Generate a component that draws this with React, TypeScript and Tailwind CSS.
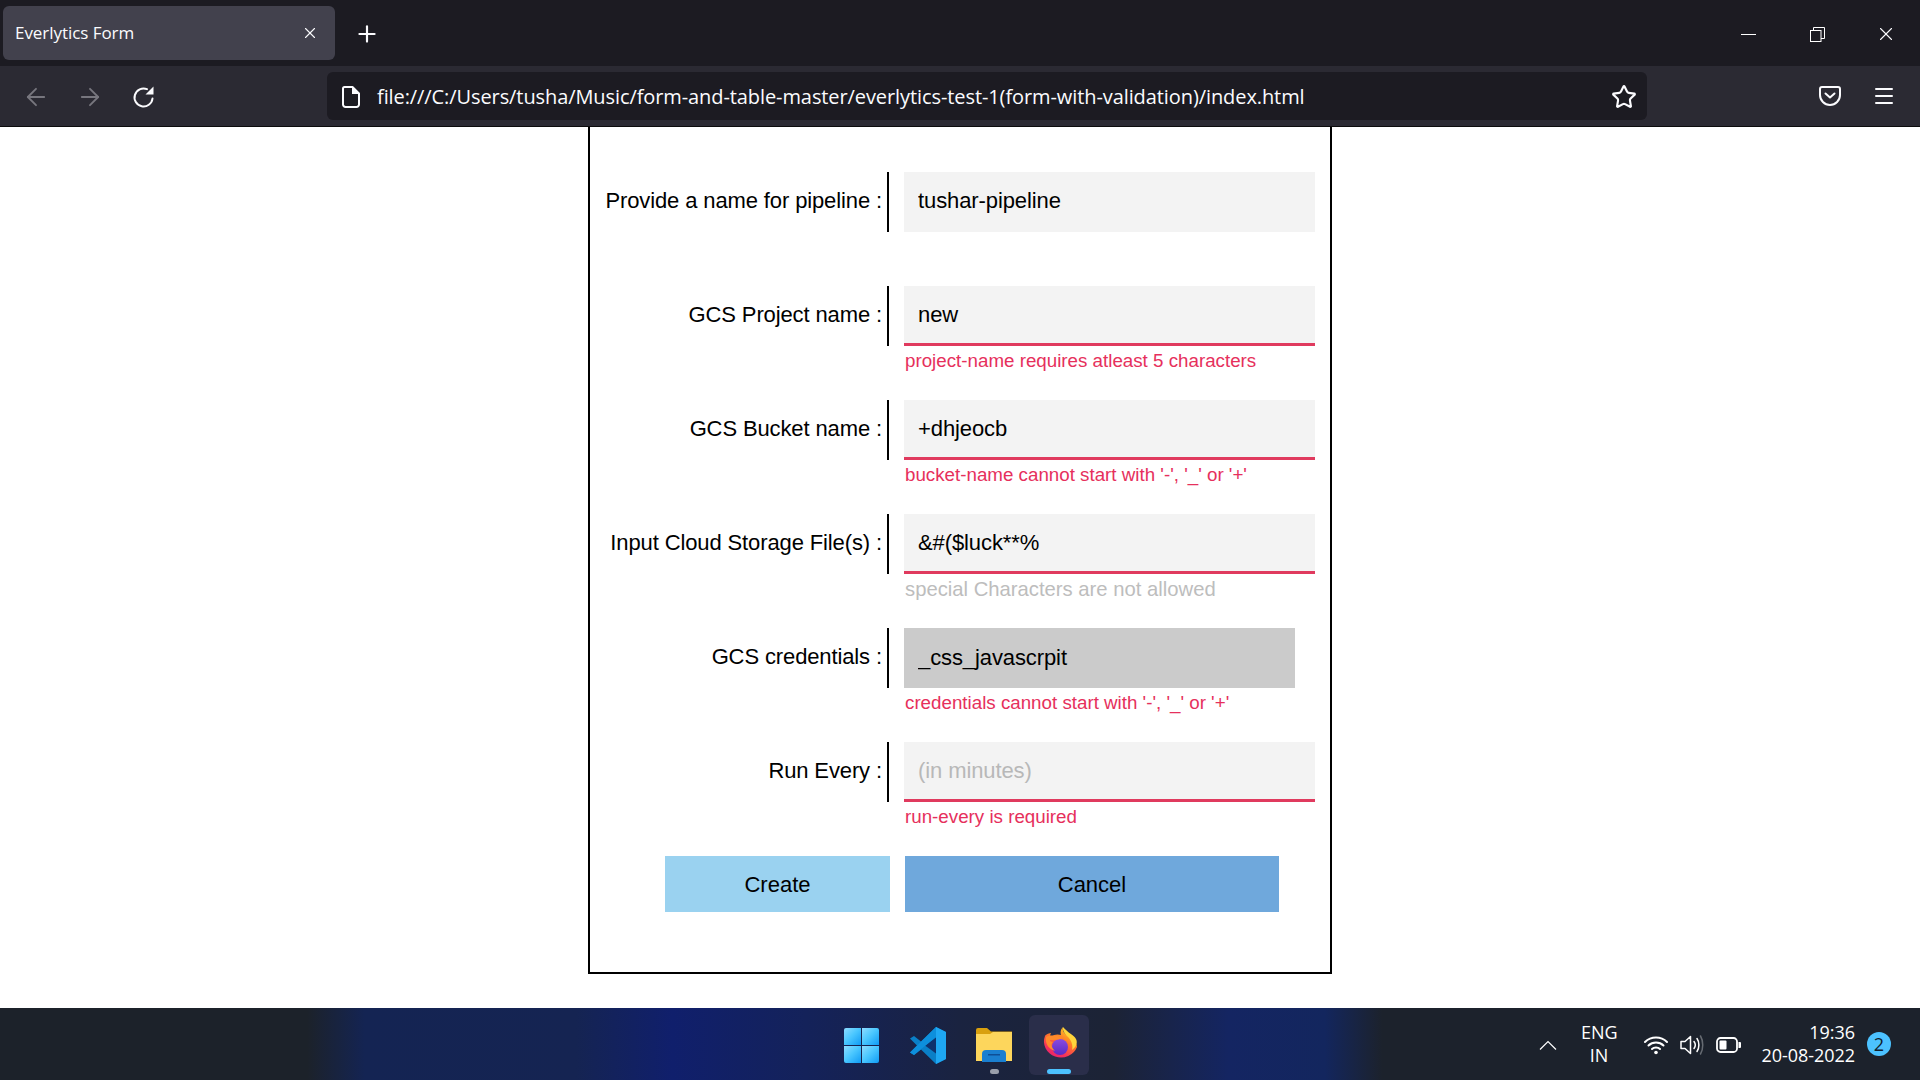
import { ArrowLeft, ArrowRight, Star, Menu, X, Plus } from "lucide-react"

interface Field {
  label: string
  value?: string
  placeholder?: string
  error?: string
  errorMuted?: boolean
  invalid?: boolean
  autofilled?: boolean
}

const fields: Field[] = [
  { label: "Provide a name for pipeline :", value: "tushar-pipeline" },
  { label: "GCS Project name :", value: "new", error: "project-name requires atleast 5 characters", invalid: true },
  { label: "GCS Bucket name :", value: "+dhjeocb", error: "bucket-name cannot start with '-', '_' or '+'", invalid: true },
  { label: "Input Cloud Storage File(s) :", value: "&#($luck**%", error: "special Characters are not allowed", errorMuted: true, invalid: true },
  { label: "GCS credentials :", value: "_css_javascrpit", error: "credentials cannot start with '-', '_' or '+'", autofilled: true },
  { label: "Run Every :", placeholder: "(in minutes)", error: "run-every is required", invalid: true },
]

function ReloadIcon() {
  return (
    <svg width="24" height="24" viewBox="0 0 24 24" fill="none">
      <path d="M20.5 13.5A9 9 0 1 1 15 4.2" stroke="#fbfbfe" strokeWidth="2" strokeLinecap="round" />
      <path d="M21.5 1.5V9.5H13.5Z" fill="#fbfbfe" />
    </svg>
  )
}

function FileIcon() {
  return (
    <svg width="20" height="22" viewBox="0 0 20 22" fill="none">
      <path d="M3.5 1H11.5L18 7.5V18.5A2.5 2.5 0 0 1 15.500 21H4.500A2.500 2.500 0 0 1 2 18.500V2.500A1.500 1.500 0 0 1 3.500 1Z" stroke="#fbfbfe" strokeWidth="2" strokeLinejoin="round" />
      <path d="M11 1V8H18Z" fill="#fbfbfe" />
    </svg>
  )
}

function PocketIcon() {
  return (
    <svg width="22" height="20" viewBox="0 0 22 20" fill="none">
      <path d="M3 1H19A2 2 0 0 1 21 3V9A10 10 0 0 1 1 9V3A2 2 0 0 1 3 1Z" stroke="#fbfbfe" strokeWidth="2" />
      <path d="M6.500 7.500L11 11.500L15.500 7.500" stroke="#fbfbfe" strokeWidth="2" strokeLinecap="round" strokeLinejoin="round" />
    </svg>
  )
}

function RestoreIcon() {
  return (
    <svg width="15" height="15" viewBox="0 0 15 15" fill="none" stroke="#fff" strokeWidth="1">
      <rect x="0.500" y="3.500" width="10.500" height="11" />
      <path d="M3.500 3.500V0.500H14.500V11.500H11" />
    </svg>
  )
}

function WindowsIcon() {
  return (
    <svg width="35" height="35" viewBox="0 0 35 35">
      <defs>
        <linearGradient id="win" x1="0" y1="0" x2="1" y2="1">
          <stop offset="0" stopColor="#8fdcff" />
          <stop offset="0.45" stopColor="#4cc8ff" />
          <stop offset="1" stopColor="#0f9bf5" />
        </linearGradient>
      </defs>
      <path d="M2 0H17V17H0V2A2 2 0 0 1 2 0Z" fill="url(#win)" />
      <path d="M18 0H33A2 2 0 0 1 35 2V17H18Z" fill="url(#win)" />
      <path d="M0 18H17V35H2A2 2 0 0 1 0 33Z" fill="url(#win)" />
      <path d="M18 18H35V33A2 2 0 0 1 33 35H18Z" fill="url(#win)" />
    </svg>
  )
}

function VsCodeIcon() {
  return (
    <svg width="36" height="37" viewBox="0 0 36 37">
      <path d="M26 0L36 5V32L26 37L11 22.500L4 28L0 25.500L7 18.500L0 11.500L4 9L11 14.500Z" fill="#0a7fc7" />
      <path d="M26 0L36 5V32L26 37Z" fill="#1ea7f2" />
      <path d="M26 10.500V26.500L15 18.500Z" fill="#0e2a63" opacity="0.9" />
      <path d="M0 25.500L4 28L26 10V0Z" fill="#0d8fdc" />
    </svg>
  )
}

function FolderIcon() {
  return (
    <svg width="36" height="34" viewBox="0 0 36 34">
      <path d="M0 2A2 2 0 0 1 2 0H11L15 3.500H36V10H0Z" fill="#d9a00e" />
      <path d="M0 6H14L17 4H36V33H0Z" fill="#fdd65c" />
      <path d="M6 33V26A4 4 0 0 1 10 22H26A4 4 0 0 1 30 26V34H6Z" fill="#1a7fd0" />
      <rect x="12" y="26" width="12" height="1.500" fill="#0e4f96" />
    </svg>
  )
}

function FirefoxIcon() {
  return (
    <svg width="35" height="36" viewBox="0 0 35 36">
      <defs>
        <linearGradient id="ffBody" x1="0.800" y1="0.100" x2="0.300" y2="1">
          <stop offset="0" stopColor="#ffc326" />
          <stop offset="0.400" stopColor="#ff7a26" />
          <stop offset="0.800" stopColor="#f5305c" />
          <stop offset="1" stopColor="#e8236f" />
        </linearGradient>
        <linearGradient id="ffCore" x1="0.500" y1="0" x2="0.500" y2="1">
          <stop offset="0" stopColor="#8a4be0" />
          <stop offset="1" stopColor="#5a2bc4" />
        </linearGradient>
      </defs>
      <path d="M21 0C20 4 22 6 26 9C25 7 27 7 29 9C33 13 35 17 35 20A17 16 0 1 1 3 9C4 7 8 6 9 6C8 8 8 9 9 10C12 7 16 7 19 8C18 5 19 2 21 0Z" fill="url(#ffBody)" />
      <path d="M21 0C20 4 23 7 27 11C30 15 31 19 30 23C34 20 36 16 34 12C32 8 26 6 21 0Z" fill="#ffd43b" />
      <circle cx="18" cy="20" r="8" fill="url(#ffCore)" />
      <path d="M4 10C3 16 6 22 13 24C9 20 9 17 11 15C9 15 8 14 8 13C12 13 17 13 20 11C15 8 8 8 4 10Z" fill="#ff8a2b" />
    </svg>
  )
}

function WifiIcon() {
  return (
    <svg width="24" height="20" viewBox="0 0 24 20" fill="none" stroke="#fff" strokeWidth="2" strokeLinecap="round">
      <path d="M1 7C7 1 17 1 23 7" />
      <path d="M4.500 10.500C8.500 6.500 15.500 6.500 19.500 10.500" />
      <path d="M8 14C10 12 14 12 16 14" />
      <circle cx="12" cy="17.500" r="1.800" fill="#fff" stroke="none" />
    </svg>
  )
}

function VolumeIcon() {
  return (
    <svg width="24" height="20" viewBox="0 0 24 20" fill="none" strokeWidth="1.500">
      <path d="M1 6.500H5L10.500 1.500V18.500L5 13.500H1Z" stroke="#fff" strokeLinejoin="round" />
      <path d="M14 6.500C15.500 8.500 15.500 11.500 14 13.500" stroke="#fff" strokeLinecap="round" />
      <path d="M17 3.500C19.500 7 19.500 13 17 16.500" stroke="#fff" strokeLinecap="round" />
      <path d="M20.500 1C23.500 6 23.500 14 20.500 19" stroke="#666b72" strokeLinecap="round" />
    </svg>
  )
}

function BatteryIcon() {
  return (
    <svg width="25" height="16" viewBox="0 0 25 16" fill="none">
      <rect x="1" y="1" width="20" height="14" rx="3.500" stroke="#fff" strokeWidth="1.800" />
      <rect x="3.500" y="3.500" width="7" height="9" rx="1" fill="#fff" />
      <path d="M22.500 5H24A1 1 0 0 1 25 6V10A1 1 0 0 1 24 11H22.500Z" fill="#fff" />
    </svg>
  )
}

export default function App() {
  return (
    <div className="flex h-screen w-full flex-col overflow-hidden bg-white font-['Liberation_Sans',Arial,sans-serif]">
      {/* Tab strip */}
      <div className="flex h-[66px] shrink-0 items-center bg-[#1c1b22] pl-[3px] font-['Open_Sans',sans-serif] text-[#fbfbfe]">
        <div className="flex h-[54px] w-[332px] items-center justify-between rounded-[6px] bg-[#42414d] pl-[12px] pr-[17px]">
          <span className="text-[17px] tracking-[-0.05px]">Everlytics Form</span>
          <X size={18} strokeWidth={1.5} className="-mr-px" />
        </div>
        <Plus size={26} strokeWidth={2} className="ml-[19px] mt-[2px]" />
        <div className="ml-auto mt-[2px] flex items-center">
          <div className="mr-[54px] h-px w-[15px] bg-white" />
          <div className="mr-[50px]"><RestoreIcon /></div>
          <X size={22} strokeWidth={1.2} className="mr-[23px]" />
        </div>
      </div>

      {/* Toolbar */}
      <div className="flex h-[61px] shrink-0 items-center border-b border-[#0c0c0d] bg-[#2b2a33] text-[#fbfbfe]">
        <ArrowLeft size={28} strokeWidth={1.6} className="ml-[22px] mt-[2px] text-[#77767e]" />
        <ArrowRight size={28} strokeWidth={1.6} className="ml-[26px] mt-[2px] text-[#77767e]" />
        <div className="ml-[28px] mt-[2px]"><ReloadIcon /></div>
        <div className="ml-[171px] flex h-[48px] w-[1320px] items-center rounded-[6px] bg-[#1c1b22] pl-[15px] pr-[10px]">
          <div className="-ml-px mt-[2px]"><FileIcon /></div>
          <span className="ml-[16px] mt-[2px] font-['Open_Sans',sans-serif] text-[20px] tracking-[-0.09px]">
            file:///C:/Users/tusha/Music/form-and-table-master/everlytics-test-1(form-with-validation)/index.html
          </span>
          <Star size={26} strokeWidth={2} className="ml-auto mt-[2px]" />
        </div>
        <div className="ml-[172px]"><PocketIcon /></div>
        <Menu size={24} strokeWidth={2} className="ml-[31px]" />
      </div>

      {/* Page */}
      <main className="min-h-0 flex-1 overflow-hidden">
        <div className="ml-[588px] w-[744px] border-x-2 border-b-2 border-black pb-[60px] pt-[45px] text-[22px] text-black">
          {fields.map((field) => (
            <div key={field.label} className="flex h-[114px] items-start">
              <label className="flex h-[60px] w-[299px] shrink-0 items-center justify-end border-r-2 border-black pb-[3px] pr-[5px] leading-none tracking-[-0.12px]">
                {field.label}
              </label>
              <div className="ml-[15px]">
                <input
                  readOnly
                  defaultValue={field.value}
                  placeholder={field.placeholder}
                  className={
                    field.autofilled
                      ? "block h-[60px] w-[391px] bg-[#cbcbcb] px-[14px] tracking-[-0.1px] text-black outline-none"
                      : field.invalid
                        ? "block h-[60px] w-[411px] border-b-[3px] border-[#e03a5e] bg-[#f3f3f3] px-[14px] tracking-[-0.1px] text-black outline-none placeholder:text-[#b8b8b8]"
                        : "block h-[60px] w-[411px] border-b-[3px] border-transparent bg-[#f3f3f3] px-[14px] tracking-[-0.1px] text-black outline-none"
                  }
                />
                {field.error && (
                  <p className={`ml-px mt-[4px] leading-[22px] ${field.errorMuted ? "text-[20.25px] text-[#bdbdbd]" : "text-[18.75px] text-[#e6305c]"}`}>
                    {field.error}
                  </p>
                )}
              </div>
            </div>
          ))}
          <div className="ml-[75px] flex gap-[15px]">
            <button className="h-[56px] w-[225px] bg-[#9ad2f0]">Create</button>
            <button className="h-[56px] w-[374px] bg-[#6fa8dc]">Cancel</button>
          </div>
        </div>
      </main>

      {/* Taskbar */}
      <footer className="grid h-[72px] shrink-0 grid-cols-[1fr_auto_1fr] items-center bg-[linear-gradient(90deg,#1c222a_0%,#1c222a_16%,#142453_19%,#152452_30%,#101f6c_35%,#14225a_42%,#1a2340_50%,#1c2335_58%,#142562_64%,#13265e_69%,#1c222c_72%,#1c222c_100%)] pt-[2px] font-['Open_Sans',sans-serif] text-white">
        <div />
        <div className="flex items-center gap-[6px]">
          <div className="flex h-[60px] w-[60px] items-center justify-center"><WindowsIcon /></div>
          <div className="flex h-[60px] w-[60px] items-center justify-center pl-[1px]"><VsCodeIcon /></div>
          <div className="relative flex h-[60px] w-[60px] items-center justify-center pl-[2px]">
            <FolderIcon />
            <span className="absolute bottom-[1px] left-[27px] h-[5px] w-[9px] rounded-full bg-[#9a9fab]" />
          </div>
          <div className="relative flex h-[60px] w-[60px] items-center justify-center rounded-[6px] bg-[#2a2e4a] pb-[1px]">
            <FirefoxIcon />
            <span className="absolute bottom-[1px] left-[18px] h-[5px] w-[24px] rounded-full bg-[#4cc2ff]" />
          </div>
        </div>
        <div className="flex items-center justify-end pr-[29px]">
          <svg width="18" height="10" viewBox="0 0 18 10" fill="none" stroke="#fff" strokeWidth="1.200">
            <path d="M1 9.500L9 1.500L17 9.500" />
          </svg>
          <div className="-mt-[2px] ml-[24px] w-[36px] text-center text-[18px] leading-[23px]">
            <div>ENG</div>
            <div>IN</div>
          </div>
          <div className="ml-[27px]"><WifiIcon /></div>
          <div className="ml-[12px]"><VolumeIcon /></div>
          <div className="ml-[12px]"><BatteryIcon /></div>
          <div className="-mt-[2px] ml-[20px] w-[94px] text-right text-[18px] leading-[23px] tracking-[-0.05px]">
            <div>19:36</div>
            <div>20-08-2022</div>
          </div>
          <div className="-mt-[2px] ml-[12px] flex h-[24px] w-[24px] items-center justify-center rounded-full bg-[#4cc2ff] text-[18px] text-[#10202c]">
            2
          </div>
        </div>
      </footer>
    </div>
  )
}
